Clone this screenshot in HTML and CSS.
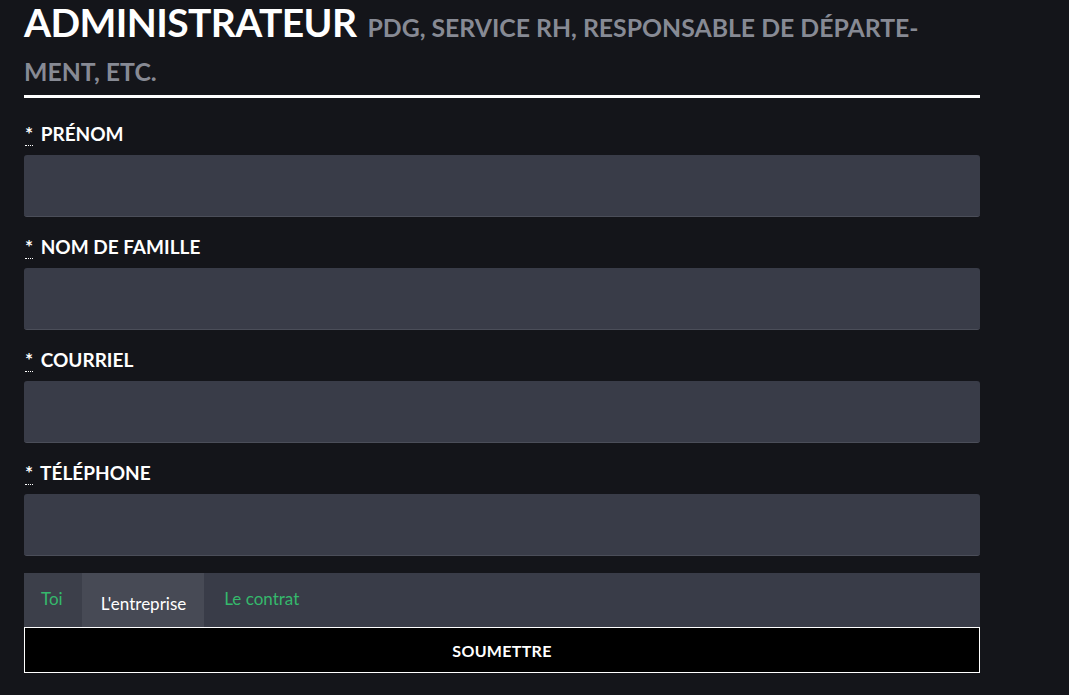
FILE: index.html
```html
<!DOCTYPE html>
<html lang="fr">
<head>
<meta charset="utf-8">
<link rel="stylesheet" href="styles.css">
</head>
<body>
<main class="page">
  <h2 class="heading"><span class="heading-main">ADMINISTRATEUR</span><span class="heading-sub">PDG, SERVICE RH, RESPONSABLE DE DÉPARTE-<br>MENT, ETC.</span></h2>
  <form class="form">
    <div class="field">
      <label class="label"><abbr class="req" title="requis">*</abbr> PRÉNOM</label>
      <input class="input" type="text">
    </div>
    <div class="field">
      <label class="label"><abbr class="req" title="requis">*</abbr> NOM DE FAMILLE</label>
      <input class="input" type="text">
    </div>
    <div class="field">
      <label class="label"><abbr class="req" title="requis">*</abbr> COURRIEL</label>
      <input class="input" type="text">
    </div>
    <div class="field field-last">
      <label class="label"><abbr class="req" title="requis">*</abbr> TÉLÉPHONE</label>
      <input class="input" type="text">
    </div>
    <nav class="tabs">
      <span class="tab tab-first">Toi</span>
      <span class="tab tab-active">L'entreprise</span>
      <span class="tab">Le contrat</span>
    </nav>
    <button class="submit" type="button">SOUMETTRE</button>
  </form>
</main>
</body>
</html>
```
FILE: styles.css
```css
html, body {
  margin: 0;
  padding: 0;
  background: #14151a;
  font-family: "Lato", "DejaVu Sans", sans-serif;
  color: #ffffff;
}
.page {
  width: 956px;
  padding: 0 24px;
}
.heading {
  margin: 0;
  padding: 0 0 1px 0;
  border-bottom: 3px solid #ffffff;
  line-height: 44px;
  font-weight: 700;
}
.heading-main {
  font-size: 39px;
  color: #ffffff;
  letter-spacing: -0.6px;
  margin-right: 11px;
}
.heading-sub {
  font-size: 24.8px;
  color: #878a94;
  letter-spacing: 0;
}
.form {
  display: flex;
  flex-direction: column;
  padding-top: 24px;
}
.field {
  display: flex;
  flex-direction: column;
  margin-bottom: 18px;
}
.field-last {
  margin-bottom: 17px;
}
.label {
  font-size: 19px;
  font-weight: 700;
  line-height: 24px;
  margin-bottom: 9px;
}
.req {
  text-decoration: none;
  border-bottom: 1px dotted #ffffff;
  margin-left: 1px;
  margin-right: 3px;
}
.input {
  box-sizing: border-box;
  height: 62px;
  width: 100%;
  background: #393c48;
  border: none;
  border-bottom: 1px solid #4b4e59;
  border-radius: 3px;
  margin: 0;
}
.tabs {
  display: flex;
  height: 54px;
  background: #393c48;
}
.tab {
  display: flex;
  align-items: center;
  padding: 0 20px 3px 20px;
  font-size: 17px;
  color: #35b86c;
}
.tab-first {
  background: #3c3f4a;
  padding: 0 19px 3px 17px;
}
.tab-active {
  background: #474a55;
  color: #ffffff;
  padding: 6px 18px 0 19px;
}
.submit {
  height: 46px;
  background: #000000;
  border: 1px solid #ffffff;
  color: #ffffff;
  font-family: inherit;
  font-size: 16px;
  font-weight: 700;
  letter-spacing: 0.3px;
  margin: 0;
}
```
